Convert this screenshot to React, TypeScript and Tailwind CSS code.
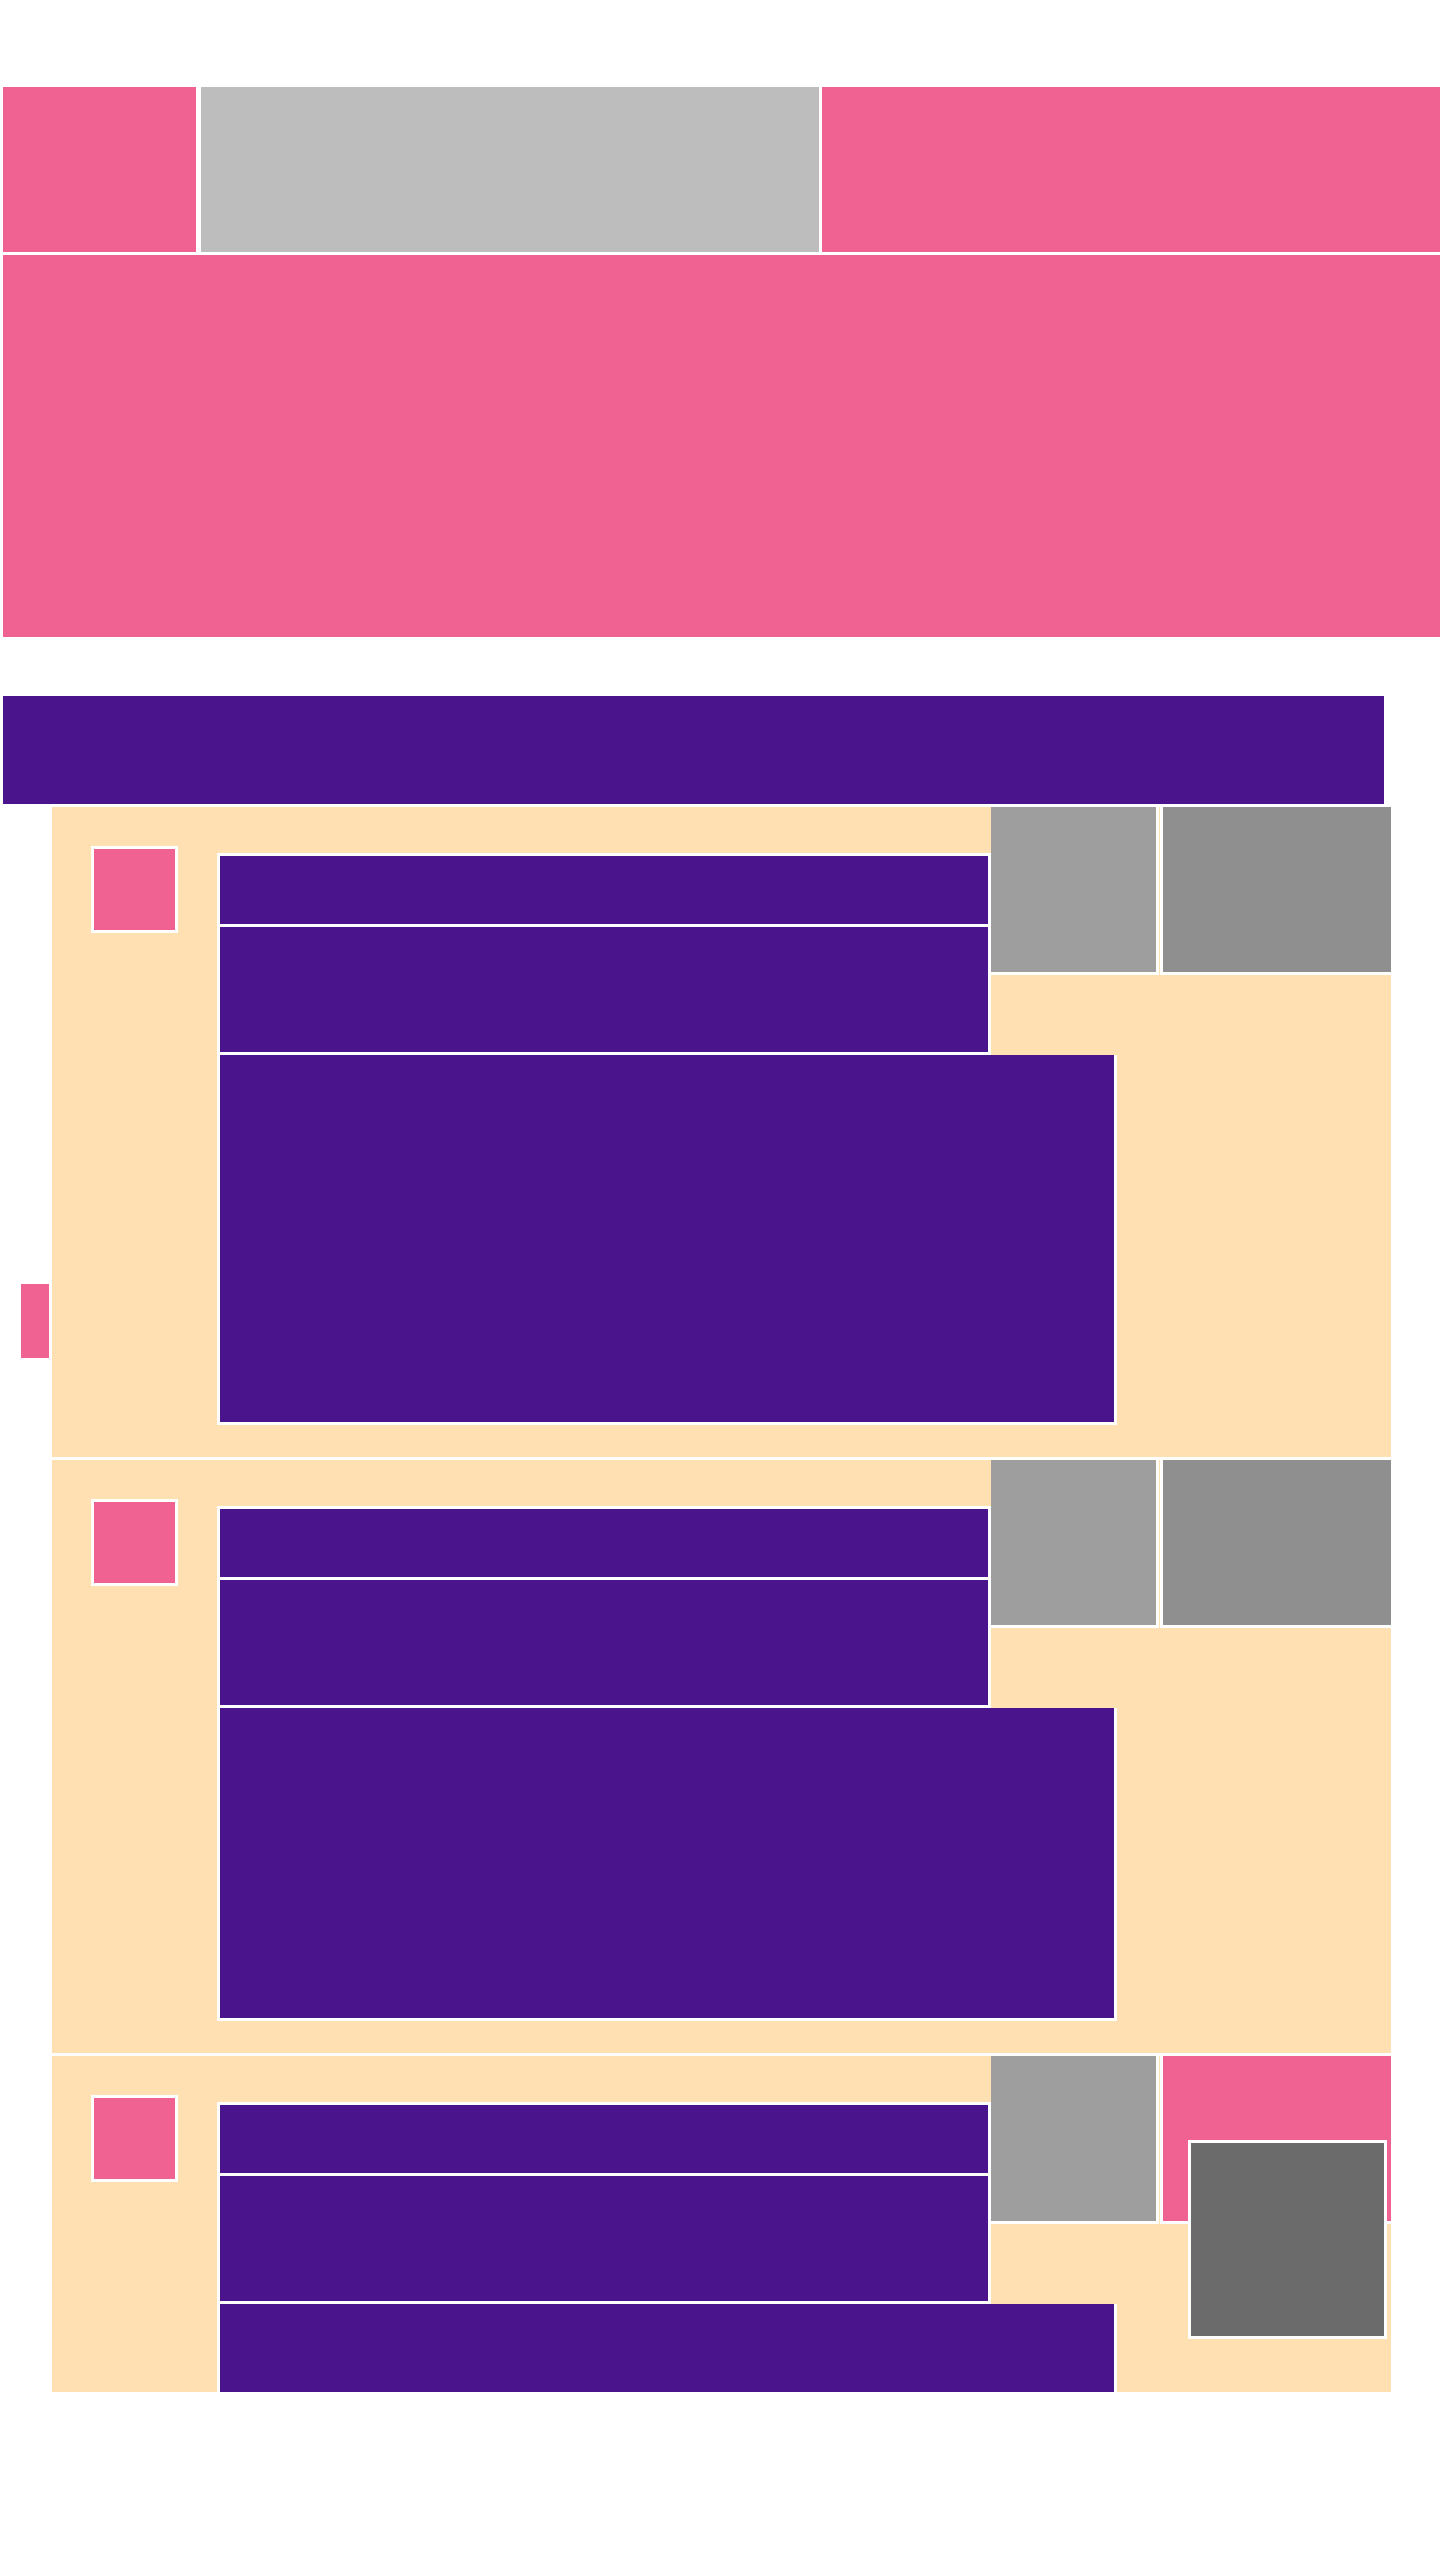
import React from "react";

type CardProps = { variant: 1 | 2 | 3 };

function Card({ variant }: CardProps) {
  const bigH = variant === 1 ? "h-[370px]" : variant === 2 ? "h-[313px]" : "h-[370px]";
  return (
    <div
      className={
        "relative w-[1339px] bg-[#FFE0B2] flex flex-col " +
        (variant === 3 ? "h-[336px] overflow-hidden" : "pb-[32px]")
      }
    >
      <div className="flex items-start">
        <div className="w-[165px] shrink-0 pl-[39px] pt-[39px]">
          <div className="w-[87px] h-[87px] bg-[#F06292] border-[3px] border-white" />
        </div>
        <div className="w-[774px] shrink-0 pt-[46px] flex flex-col">
          <div className="h-[74px] bg-[#4A148C] border-[3px] border-white" />
          <div className="h-[128px] bg-[#4A148C] border-x-[3px] border-b-[3px] border-white" />
        </div>
        <div className="w-[400px] shrink-0 flex gap-[1px]">
          <div className="w-[168px] h-[168px] bg-[#9E9E9E] border-r-[3px] border-b-[3px] border-white" />
          <div
            className={
              "w-[231px] h-[168px] border-l-[3px] border-b-[3px] border-white " +
              (variant === 3 ? "bg-[#F06292]" : "bg-[#8F8F8F]")
            }
          />
        </div>
      </div>
      <div
        className={
          "ml-[165px] w-[900px] shrink-0 bg-[#4A148C] border-x-[3px] border-b-[3px] border-white " + bigH
        }
      />
      {variant === 3 && (
        <div className="absolute left-[1136px] top-[84px] w-[199px] h-[199px] bg-[#6B6B6B] border-[3px] border-white" />
      )}
    </div>
  );
}

export default function App() {
  return (
    <div className="relative w-[1440px] min-h-[2560px] bg-white">
      <div className="pt-[87px] pl-[3px] flex flex-col">
        <div className="flex h-[165px]">
          <div className="w-[193px] shrink-0 bg-[#F06292]" />
          <div className="ml-[5px] w-[618px] shrink-0 bg-[#BDBDBD]" />
          <div className="ml-[3px] flex-1 bg-[#F06292]" />
        </div>
        <div className="mt-[3px] h-[382px] bg-[#F06292]" />
        <div className="mt-[59px] w-[1381px] h-[108px] bg-[#4A148C]" />
      </div>
      <div className="mt-[3px] pl-[52px] flex flex-col gap-[3px]">
        <Card variant={1} />
        <Card variant={2} />
        <Card variant={3} />
      </div>
      <div className="absolute left-[21px] top-[1284px] w-[28px] h-[74px] bg-[#F06292]" />
    </div>
  );
}
